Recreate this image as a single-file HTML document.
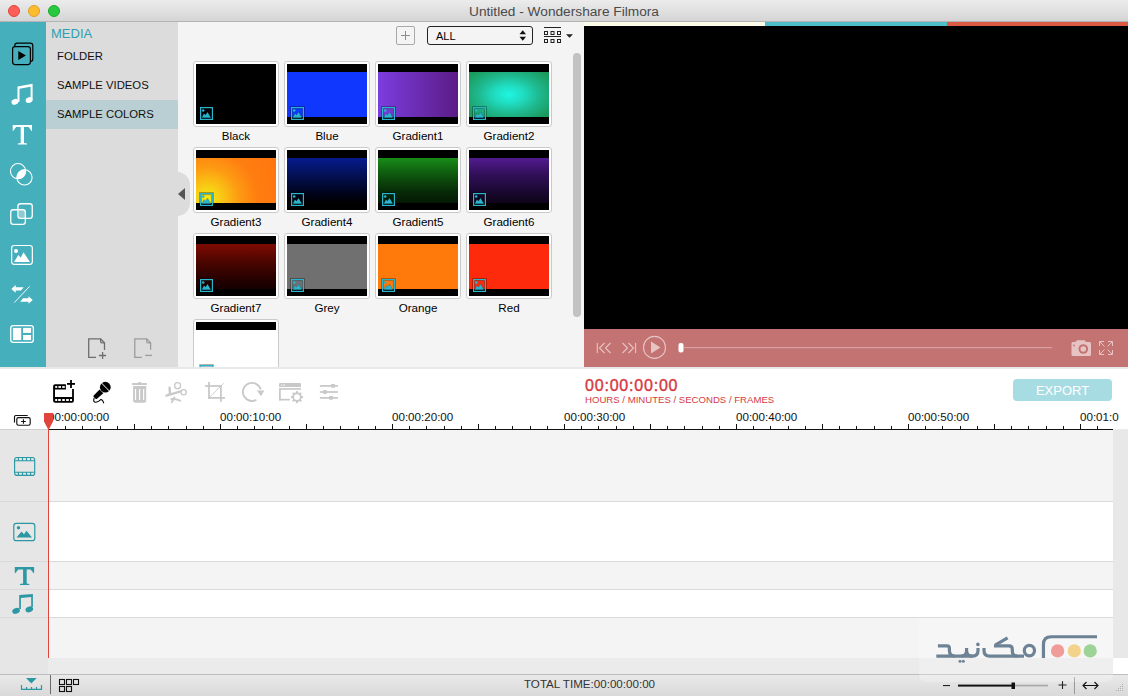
<!DOCTYPE html>
<html><head><meta charset="utf-8">
<style>
*{margin:0;padding:0;box-sizing:border-box}
html,body{width:1128px;height:696px;overflow:hidden;background:#f4f4f4;font-family:"Liberation Sans",sans-serif}
.a{position:absolute}
#title{left:0;top:0;width:1128px;height:22px;background:linear-gradient(#ececec,#d5d5d5);border-bottom:1px solid #b4b4b4}
.tl{width:12px;height:12px;border-radius:50%;top:5px}
#side{left:0;top:22px;width:46px;height:345px;background:#45b0bc}
#mpanel{left:46px;top:22px;width:132px;height:345px;background:#dcdcdc;z-index:2}
.mi{left:11px;font-size:11.3px;color:#111;white-space:nowrap}
#content{left:178px;top:22px;width:406px;height:345px;background:#f4f4f4;overflow:hidden}
#preview{left:584px;top:22px;width:544px;height:345px;background:#000}
.th{width:86px;height:66px;border:1px solid #cacaca;border-radius:3px;background:#fff;padding:2px}
.th .in{width:80px;height:60px;background:#000;position:relative;overflow:hidden}
.th .cl{position:absolute;left:0;top:8px;width:80px;height:45px}
.lbl{font-size:11.6px;color:#000;text-align:center;width:86px;white-space:nowrap}
.ic{position:absolute;left:3px;top:42px;width:15px;height:15px}
#tlbar{left:0;top:367px;width:1128px;height:62px;background:#fff;border-top:2px solid #e6e9e9}
#tracks{left:0;top:429px;width:1128px;height:245px;background:#ebebeb}
#status{left:0;top:674px;width:1128px;height:22px;background:linear-gradient(#e9e9e9,#d9d9d9);border-top:1px solid #bdbdbd}
</style></head><body>
<div id="title" class="a">
  <div class="a tl" style="left:8px;background:#fc5f57;border:0.5px solid #e0443e"></div>
  <div class="a tl" style="left:28px;background:#fdbc2e;border:0.5px solid #dea123"></div>
  <div class="a tl" style="left:48px;background:#28c840;border:0.5px solid #1aab29"></div>
  <div class="a" style="left:0;width:1128px;top:3.5px;text-align:center;font-size:13.7px;color:#4a4a4a">Untitled - Wondershare Filmora</div>
</div>
<div id="side" class="a">
<svg class="a" style="left:0;top:0" width="46" height="345" viewBox="0 22 46 345">
 <!-- media -->
 <path d="M14.75 47 V45.7 A2.5 2.5 0 0 1 17.25 43.2 H30.3 A2.5 2.5 0 0 1 32.8 45.7 V59 A2.5 2.5 0 0 1 30.6 61.5" fill="none" stroke="#000" stroke-width="1.2"/>
 <rect x="12.6" y="46.6" width="17.8" height="18" rx="2.5" fill="none" stroke="#000" stroke-width="1.2"/>
 <path d="M18.3 51 L25.9 55.5 L18.3 60Z" fill="#000"/>
 <!-- music -->
 <g fill="#fff">
  <path d="M17.5 86.4 L32.6 83.8 V100 H30.6 V86.7 L19.5 88.8 V101.8 H17.5 Z"/>
  <ellipse cx="14.9" cy="101.8" rx="3.5" ry="2.8" transform="rotate(-18 14.9 101.8)"/>
  <ellipse cx="29.1" cy="100.1" rx="3.5" ry="2.8" transform="rotate(-18 29.1 100.1)"/>
 </g>
 <path d="M12.7 125 H32 V131 H31.6 L28.6 127 H24 V143.1 L27 143.5 V144.5 H17.8 V143.5 L20.7 143.1 V127 H16.1 L13.1 131 H12.7 Z" fill="#fff"/>
</svg>

<svg class="a" style="left:0;top:0" width="46" height="345" viewBox="0 22 46 345">
 <!-- blend circles -->
 <defs><clipPath id="c1"><circle cx="18.05" cy="171.15" r="7.8"/></clipPath></defs>
 <circle cx="24.5" cy="177.4" r="7.8" fill="#fff" clip-path="url(#c1)"/>
 <circle cx="18.05" cy="171.15" r="7.6" fill="none" stroke="#fff" stroke-width="1.1"/>
 <circle cx="24.5" cy="177.4" r="7.6" fill="none" stroke="#fff" stroke-width="1.1"/>
 <!-- overlay squares -->
 <rect x="18.6" y="210.4" width="6.8" height="8" fill="#8ccbd2"/>
 <rect x="17.95" y="203.75" width="14.3" height="14.6" rx="2.6" fill="none" stroke="#fff" stroke-width="1.3"/>
 <rect x="10.75" y="209.75" width="14.6" height="14.6" rx="2.6" fill="none" stroke="#fff" stroke-width="1.3"/>
 <!-- image -->
 <rect x="11.65" y="245.5" width="20.7" height="18.8" rx="2.5" fill="none" stroke="#fff" stroke-width="1.2"/>
 <circle cx="16" cy="251" r="2" fill="#fff"/>
 <path d="M14 261.9 L18.4 255 L20.7 257.8 L23.5 252.2 L29.9 261.9Z" fill="#fff"/>
 <!-- transitions -->
 <path d="M11.3 288.9 L15.7 285.1 V287.2 H23.7 L20.8 290.6 H15.7 V292.7 Z" fill="#fff"/>
 <path d="M32.7 299.9 L28.5 296.2 V298.2 H23 L20.2 301.7 H28.5 V303.7 Z" fill="#fff"/>
 <path d="M14.3 302.6 L29.7 286.3" stroke="#fff" stroke-width="0.9"/>
 <!-- layout -->
 <rect x="10.75" y="325.55" width="22.6" height="16.9" rx="2.6" fill="none" stroke="#fff" stroke-width="1.3"/>
 <rect x="12.9" y="327.9" width="8.3" height="12.2" fill="#fff"/>
 <rect x="23" y="327.9" width="8.1" height="5" fill="#fff"/>
 <rect x="23" y="335" width="8.1" height="5.1" fill="#fff"/>
</svg>
</div>
<div id="mpanel" class="a">
  <div class="a" style="left:5px;top:4px;font-size:13px;color:#2f9fb1">MEDIA</div>
  <div class="a mi" style="top:28px">FOLDER</div>
  <div class="a mi" style="top:57px">SAMPLE VIDEOS</div>
  <div class="a" style="left:0;top:78px;width:132px;height:29px;background:#b9cfd3"></div>
  <div class="a mi" style="top:86px">SAMPLE COLORS</div>
<div class="a" style="left:119px;top:150px;width:25px;height:44px;background:#dcdcdc;border-radius:0 13px 13px 0;z-index:3"></div>
<svg class="a" style="left:132px;top:166px;z-index:4" width="8" height="12" viewBox="0 0 8 12"><path d="M0 6 L7 0 L7 12Z" fill="#555"/></svg>
<svg class="a" style="left:0;top:0" width="132" height="345" viewBox="46 22 132 345">
 <g fill="none" stroke="#6e6e6e" stroke-width="1.3">
  <path d="M104.5 349.9 V342.8 L100.6 338.8 H88.7 V357.3 H96"/>
  <path d="M100.6 338.8 V341.6 Q100.6 342.8 101.8 342.8 H104.5"/>
  <path d="M99 355.5 H106.1 M102.6 352.1 V358.9"/>
 </g>
 <g fill="none" stroke="#9c9c9c" stroke-width="1.3">
  <path d="M150.6 349.7 V342.8 L146.7 338.8 H134.8 V357.3 H141.8"/>
  <path d="M146.7 338.8 V341.6 Q146.7 342.8 147.9 342.8 H150.6"/>
  <path d="M145.1 355.4 H152"/>
 </g>
</svg>

</div>
<div id="content" class="a">

<div class="a" style="left:218px;top:4px;width:19px;height:19px;border:1px solid #a8a8a8;border-radius:2px"></div>
<div class="a" style="left:227px;top:9px;width:1px;height:9px;background:#8c8c8c"></div>
<div class="a" style="left:223px;top:13px;width:9px;height:1px;background:#8c8c8c"></div>
<div class="a" style="left:249px;top:4px;width:106px;height:19px;border:1px solid #222;border-radius:3px;background:#f4f4f4"></div>
<div class="a" style="left:258px;top:8px;font-size:11px;color:#000">ALL</div>
<svg class="a" style="left:341px;top:8px" width="8" height="12" viewBox="0 0 8 12"><path d="M0.5 4.2 L3.75 0.3 L7 4.2Z M0.5 6.8 L3.75 10.8 L7 6.8Z" fill="#111"/></svg>
<svg class="a" style="left:365px;top:4px" width="32" height="18" viewBox="0 0 32 18">
 <rect x="1" y="1" width="17" height="1" fill="#222"/>
 <rect x="1" y="10" width="17" height="1" fill="#222"/>
 <rect x="1.5" y="5.5" width="3" height="3" fill="none" stroke="#222" stroke-width="1"/>
 <rect x="8" y="5.5" width="3" height="3" fill="none" stroke="#222" stroke-width="1"/>
 <rect x="14.5" y="5.5" width="3" height="3" fill="none" stroke="#222" stroke-width="1"/>
 <rect x="1.5" y="13.5" width="3" height="3" fill="none" stroke="#222" stroke-width="1"/>
 <rect x="8" y="13.5" width="3" height="3" fill="none" stroke="#222" stroke-width="1"/>
 <rect x="14.5" y="13.5" width="3" height="3" fill="none" stroke="#222" stroke-width="1"/>
 <path d="M23 8.2 L30 8.2 L26.5 11.7Z" fill="#222"/>
</svg>
<div class="a" style="left:395px;top:31px;width:8px;height:264px;background:#c2c2c2;border-radius:4px"></div>
<div class="a th" style="left:15px;top:39px"><div class="in"><div class="cl" style="background:#000"></div><svg class="ic" width="15" height="15" viewBox="-1 -1 15 15"><rect x="-0.4" y="-0.4" width="13.8" height="13.8" fill="none" stroke="rgba(0,0,0,0.35)" stroke-width="0.9"/><rect x="1.6" y="1.6" width="9.8" height="9.8" fill="none" stroke="rgba(0,0,0,0.3)" stroke-width="0.9"/><rect x="0.6" y="0.6" width="11.8" height="11.8" fill="none" stroke="#2ab5cf" stroke-width="1.2"/><circle cx="3.2" cy="3.5" r="1.25" fill="#2ab5cf"/><path d="M1.7 10.8 L3.9 6.5 L5.5 8 L7.5 5.1 L11 10.8Z" fill="#2ab5cf" stroke="rgba(0,0,0,0.25)" stroke-width="0.6"/></svg></div></div>
<div class="a lbl" style="left:15px;top:107px">Black</div>
<div class="a th" style="left:106px;top:39px"><div class="in"><div class="cl" style="background:#0f37fe"></div><svg class="ic" width="15" height="15" viewBox="-1 -1 15 15"><rect x="-0.4" y="-0.4" width="13.8" height="13.8" fill="none" stroke="rgba(0,0,0,0.35)" stroke-width="0.9"/><rect x="1.6" y="1.6" width="9.8" height="9.8" fill="none" stroke="rgba(0,0,0,0.3)" stroke-width="0.9"/><rect x="0.6" y="0.6" width="11.8" height="11.8" fill="none" stroke="#2ab5cf" stroke-width="1.2"/><circle cx="3.2" cy="3.5" r="1.25" fill="#2ab5cf"/><path d="M1.7 10.8 L3.9 6.5 L5.5 8 L7.5 5.1 L11 10.8Z" fill="#2ab5cf" stroke="rgba(0,0,0,0.25)" stroke-width="0.6"/></svg></div></div>
<div class="a lbl" style="left:106px;top:107px">Blue</div>
<div class="a th" style="left:197px;top:39px"><div class="in"><div class="cl" style="background:linear-gradient(90deg,#7b3ddf,#5b1c86)"></div><svg class="ic" width="15" height="15" viewBox="-1 -1 15 15"><rect x="-0.4" y="-0.4" width="13.8" height="13.8" fill="none" stroke="rgba(0,0,0,0.35)" stroke-width="0.9"/><rect x="1.6" y="1.6" width="9.8" height="9.8" fill="none" stroke="rgba(0,0,0,0.3)" stroke-width="0.9"/><rect x="0.6" y="0.6" width="11.8" height="11.8" fill="none" stroke="#2ab5cf" stroke-width="1.2"/><circle cx="3.2" cy="3.5" r="1.25" fill="#2ab5cf"/><path d="M1.7 10.8 L3.9 6.5 L5.5 8 L7.5 5.1 L11 10.8Z" fill="#2ab5cf" stroke="rgba(0,0,0,0.25)" stroke-width="0.6"/></svg></div></div>
<div class="a lbl" style="left:197px;top:107px">Gradient1</div>
<div class="a th" style="left:288px;top:39px"><div class="in"><div class="cl" style="background:radial-gradient(ellipse 62% 68% at 50% 50%,#1ff5e2 0%,#20dcc0 30%,#1fb88e 62%,#1a9a5c 100%)"></div><svg class="ic" width="15" height="15" viewBox="-1 -1 15 15"><rect x="-0.4" y="-0.4" width="13.8" height="13.8" fill="none" stroke="rgba(0,0,0,0.35)" stroke-width="0.9"/><rect x="1.6" y="1.6" width="9.8" height="9.8" fill="none" stroke="rgba(0,0,0,0.3)" stroke-width="0.9"/><rect x="0.6" y="0.6" width="11.8" height="11.8" fill="none" stroke="#2ab5cf" stroke-width="1.2"/><circle cx="3.2" cy="3.5" r="1.25" fill="#2ab5cf"/><path d="M1.7 10.8 L3.9 6.5 L5.5 8 L7.5 5.1 L11 10.8Z" fill="#2ab5cf" stroke="rgba(0,0,0,0.25)" stroke-width="0.6"/></svg></div></div>
<div class="a lbl" style="left:288px;top:107px">Gradient2</div>
<div class="a th" style="left:15px;top:125px"><div class="in"><div class="cl" style="background:radial-gradient(circle at 14% 92%,#f4ee12 0%,#f9c814 18%,#fd9a12 40%,#ff7e10 62%,#ff7510 100%)"></div><svg class="ic" width="15" height="15" viewBox="-1 -1 15 15"><rect x="-0.4" y="-0.4" width="13.8" height="13.8" fill="none" stroke="rgba(0,0,0,0.35)" stroke-width="0.9"/><rect x="1.6" y="1.6" width="9.8" height="9.8" fill="none" stroke="rgba(0,0,0,0.3)" stroke-width="0.9"/><rect x="0.6" y="0.6" width="11.8" height="11.8" fill="none" stroke="#2ab5cf" stroke-width="1.2"/><circle cx="3.2" cy="3.5" r="1.25" fill="#2ab5cf"/><path d="M1.7 10.8 L3.9 6.5 L5.5 8 L7.5 5.1 L11 10.8Z" fill="#2ab5cf" stroke="rgba(0,0,0,0.25)" stroke-width="0.6"/></svg></div></div>
<div class="a lbl" style="left:15px;top:193px">Gradient3</div>
<div class="a th" style="left:106px;top:125px"><div class="in"><div class="cl" style="background:linear-gradient(#061b8f,#031052 40%,#010420 75%,#000 100%)"></div><svg class="ic" width="15" height="15" viewBox="-1 -1 15 15"><rect x="-0.4" y="-0.4" width="13.8" height="13.8" fill="none" stroke="rgba(0,0,0,0.35)" stroke-width="0.9"/><rect x="1.6" y="1.6" width="9.8" height="9.8" fill="none" stroke="rgba(0,0,0,0.3)" stroke-width="0.9"/><rect x="0.6" y="0.6" width="11.8" height="11.8" fill="none" stroke="#2ab5cf" stroke-width="1.2"/><circle cx="3.2" cy="3.5" r="1.25" fill="#2ab5cf"/><path d="M1.7 10.8 L3.9 6.5 L5.5 8 L7.5 5.1 L11 10.8Z" fill="#2ab5cf" stroke="rgba(0,0,0,0.25)" stroke-width="0.6"/></svg></div></div>
<div class="a lbl" style="left:106px;top:193px">Gradient4</div>
<div class="a th" style="left:197px;top:125px"><div class="in"><div class="cl" style="background:linear-gradient(#188c18,#0f5a0f 35%,#072a07 75%,#041804)"></div><svg class="ic" width="15" height="15" viewBox="-1 -1 15 15"><rect x="-0.4" y="-0.4" width="13.8" height="13.8" fill="none" stroke="rgba(0,0,0,0.35)" stroke-width="0.9"/><rect x="1.6" y="1.6" width="9.8" height="9.8" fill="none" stroke="rgba(0,0,0,0.3)" stroke-width="0.9"/><rect x="0.6" y="0.6" width="11.8" height="11.8" fill="none" stroke="#2ab5cf" stroke-width="1.2"/><circle cx="3.2" cy="3.5" r="1.25" fill="#2ab5cf"/><path d="M1.7 10.8 L3.9 6.5 L5.5 8 L7.5 5.1 L11 10.8Z" fill="#2ab5cf" stroke="rgba(0,0,0,0.25)" stroke-width="0.6"/></svg></div></div>
<div class="a lbl" style="left:197px;top:193px">Gradient5</div>
<div class="a th" style="left:288px;top:125px"><div class="in"><div class="cl" style="background:linear-gradient(#521b8f,#33105c 35%,#1a0830 75%,#0e0418)"></div><svg class="ic" width="15" height="15" viewBox="-1 -1 15 15"><rect x="-0.4" y="-0.4" width="13.8" height="13.8" fill="none" stroke="rgba(0,0,0,0.35)" stroke-width="0.9"/><rect x="1.6" y="1.6" width="9.8" height="9.8" fill="none" stroke="rgba(0,0,0,0.3)" stroke-width="0.9"/><rect x="0.6" y="0.6" width="11.8" height="11.8" fill="none" stroke="#2ab5cf" stroke-width="1.2"/><circle cx="3.2" cy="3.5" r="1.25" fill="#2ab5cf"/><path d="M1.7 10.8 L3.9 6.5 L5.5 8 L7.5 5.1 L11 10.8Z" fill="#2ab5cf" stroke="rgba(0,0,0,0.25)" stroke-width="0.6"/></svg></div></div>
<div class="a lbl" style="left:288px;top:193px">Gradient6</div>
<div class="a th" style="left:15px;top:211px"><div class="in"><div class="cl" style="background:linear-gradient(#7e0b00,#4c0500 40%,#240100 80%,#150000)"></div><svg class="ic" width="15" height="15" viewBox="-1 -1 15 15"><rect x="-0.4" y="-0.4" width="13.8" height="13.8" fill="none" stroke="rgba(0,0,0,0.35)" stroke-width="0.9"/><rect x="1.6" y="1.6" width="9.8" height="9.8" fill="none" stroke="rgba(0,0,0,0.3)" stroke-width="0.9"/><rect x="0.6" y="0.6" width="11.8" height="11.8" fill="none" stroke="#2ab5cf" stroke-width="1.2"/><circle cx="3.2" cy="3.5" r="1.25" fill="#2ab5cf"/><path d="M1.7 10.8 L3.9 6.5 L5.5 8 L7.5 5.1 L11 10.8Z" fill="#2ab5cf" stroke="rgba(0,0,0,0.25)" stroke-width="0.6"/></svg></div></div>
<div class="a lbl" style="left:15px;top:279px">Gradient7</div>
<div class="a th" style="left:106px;top:211px"><div class="in"><div class="cl" style="background:#707070"></div><svg class="ic" width="15" height="15" viewBox="-1 -1 15 15"><rect x="-0.4" y="-0.4" width="13.8" height="13.8" fill="none" stroke="rgba(0,0,0,0.35)" stroke-width="0.9"/><rect x="1.6" y="1.6" width="9.8" height="9.8" fill="none" stroke="rgba(0,0,0,0.3)" stroke-width="0.9"/><rect x="0.6" y="0.6" width="11.8" height="11.8" fill="none" stroke="#2ab5cf" stroke-width="1.2"/><circle cx="3.2" cy="3.5" r="1.25" fill="#2ab5cf"/><path d="M1.7 10.8 L3.9 6.5 L5.5 8 L7.5 5.1 L11 10.8Z" fill="#2ab5cf" stroke="rgba(0,0,0,0.25)" stroke-width="0.6"/></svg></div></div>
<div class="a lbl" style="left:106px;top:279px">Grey</div>
<div class="a th" style="left:197px;top:211px"><div class="in"><div class="cl" style="background:#ff7a0a"></div><svg class="ic" width="15" height="15" viewBox="-1 -1 15 15"><rect x="-0.4" y="-0.4" width="13.8" height="13.8" fill="none" stroke="rgba(0,0,0,0.35)" stroke-width="0.9"/><rect x="1.6" y="1.6" width="9.8" height="9.8" fill="none" stroke="rgba(0,0,0,0.3)" stroke-width="0.9"/><rect x="0.6" y="0.6" width="11.8" height="11.8" fill="none" stroke="#2ab5cf" stroke-width="1.2"/><circle cx="3.2" cy="3.5" r="1.25" fill="#2ab5cf"/><path d="M1.7 10.8 L3.9 6.5 L5.5 8 L7.5 5.1 L11 10.8Z" fill="#2ab5cf" stroke="rgba(0,0,0,0.25)" stroke-width="0.6"/></svg></div></div>
<div class="a lbl" style="left:197px;top:279px">Orange</div>
<div class="a th" style="left:288px;top:211px"><div class="in"><div class="cl" style="background:#fd2a0b"></div><svg class="ic" width="15" height="15" viewBox="-1 -1 15 15"><rect x="-0.4" y="-0.4" width="13.8" height="13.8" fill="none" stroke="rgba(0,0,0,0.35)" stroke-width="0.9"/><rect x="1.6" y="1.6" width="9.8" height="9.8" fill="none" stroke="rgba(0,0,0,0.3)" stroke-width="0.9"/><rect x="0.6" y="0.6" width="11.8" height="11.8" fill="none" stroke="#2ab5cf" stroke-width="1.2"/><circle cx="3.2" cy="3.5" r="1.25" fill="#2ab5cf"/><path d="M1.7 10.8 L3.9 6.5 L5.5 8 L7.5 5.1 L11 10.8Z" fill="#2ab5cf" stroke="rgba(0,0,0,0.25)" stroke-width="0.6"/></svg></div></div>
<div class="a lbl" style="left:288px;top:279px">Red</div>
<div class="a th" style="left:15px;top:297px"><div class="in"><div class="cl" style="background:#fff"></div><svg class="ic" width="15" height="15" viewBox="-1 -1 15 15"><rect x="-0.4" y="-0.4" width="13.8" height="13.8" fill="none" stroke="rgba(0,0,0,0.35)" stroke-width="0.9"/><rect x="1.6" y="1.6" width="9.8" height="9.8" fill="none" stroke="rgba(0,0,0,0.3)" stroke-width="0.9"/><rect x="0.6" y="0.6" width="11.8" height="11.8" fill="none" stroke="#2ab5cf" stroke-width="1.2"/><circle cx="3.2" cy="3.5" r="1.25" fill="#2ab5cf"/><path d="M1.7 10.8 L3.9 6.5 L5.5 8 L7.5 5.1 L11 10.8Z" fill="#2ab5cf" stroke="rgba(0,0,0,0.25)" stroke-width="0.6"/></svg></div></div>
</div>
<div id="preview" class="a">
 <div class="a" style="left:0;top:0;width:181px;height:4px;background:#fdfce8"></div>
 <div class="a" style="left:181px;top:0;width:182px;height:4px;background:#4fbdca"></div>
 <div class="a" style="left:363px;top:0;width:181px;height:4px;background:#dd5a44"></div>
 <div class="a" style="left:0;top:307px;width:544px;height:38px;background:#c47373"></div>
 <svg class="a" style="left:0;top:307px" width="544" height="38" viewBox="584 329 544 38">
  <g fill="none" stroke="#e8c3c3" stroke-width="1.1">
   <path d="M597.3 343 V353"/>
   <path d="M604.5 343 L599.5 348 L604.5 353 M610.5 343 L605.5 348 L610.5 353"/>
   <path d="M622.5 343 L627.5 348 L622.5 353 M628.5 343 L633.5 348 L628.5 353"/>
   <path d="M635.6 343 V353"/>
   <circle cx="654.5" cy="347.4" r="11"/>
  </g>
  <path d="M651 341.5 L660.5 347.5 L651 353.5Z" fill="#e8c3c3"/>
  <rect x="684" y="347" width="368" height="1.2" fill="#d9a0a4"/>
  <rect x="678.5" y="343" width="5" height="9.5" rx="2" fill="#fff"/>
  <!-- camera -->
  <path d="M1071.5 343.5 Q1071.5 342 1073 342 H1075.5 L1077 340.3 H1084.5 L1086 342 H1089.5 Q1091 342 1091 343.5 V354.5 Q1091 356 1089.5 356 H1073 Q1071.5 356 1071.5 354.5Z" fill="#e8c3c3"/>
  <circle cx="1083.3" cy="349" r="4.8" fill="#c47373"/>
  <circle cx="1083.3" cy="349" r="2.8" fill="#e8c3c3"/>
  <circle cx="1074" cy="345.5" r="0.9" fill="#c47373"/>
  <!-- fullscreen -->
  <g fill="none" stroke="#e8c3c3" stroke-width="1">
   <path d="M1099.5 346 V341.5 H1104 M1100 342 L1104.5 346.5"/>
   <path d="M1108 341.5 H1112.5 V346 M1112 342 L1107.5 346.5"/>
   <path d="M1099.5 350 V354.5 H1104 M1100 354 L1104.5 349.5"/>
   <path d="M1108 354.5 H1112.5 V350 M1112 354 L1107.5 349.5"/>
  </g>
 </svg>
</div>
<div id="tlbar" class="a"></div>
<svg class="a" style="left:0;top:367px" width="1128" height="62" viewBox="0 367 1128 62">
 <!-- film add -->
 <g fill="#000">
  <path d="M53.1 386.2 Q53.1 384.2 55.1 384.2 H65.9 V389.6 H55 V397 H72.1 V389 H73.9 V400.7 Q73.9 402.7 71.9 402.7 H55.1 Q53.1 402.7 53.1 400.7 Z"/>
  <rect x="67" y="383" width="8" height="1.8"/>
  <rect x="70.1" y="380" width="1.8" height="8"/>
 </g>
 <g fill="#fff">
  <rect x="55.2" y="386.1" width="2" height="1.8"/><rect x="58.4" y="386.1" width="2.6" height="1.8"/><rect x="62.2" y="386.1" width="2.6" height="1.8"/>
  <rect x="55.2" y="399" width="2" height="2"/><rect x="58.2" y="399" width="2.6" height="2"/><rect x="62.2" y="399" width="2.6" height="2"/><rect x="66.2" y="399" width="2.6" height="2"/><rect x="70" y="399" width="2" height="2"/>
 </g>
 <!-- mic -->
 <g fill="#000">
  <circle cx="105.3" cy="387.2" r="5.4"/>
  <path d="M99.6 389.6 L103.3 393.3 L97 398.8 Q96.3 399.4 95.6 398.8 L93.7 396.9 Q93.1 396.2 93.7 395.5 Z"/>
 </g>
 <path d="M101.3 382.8 L109.7 391.4" stroke="#fff" stroke-width="1"/>
 <path d="M94.2 398 Q92.6 402.4 96 402.3 Q98.7 401.6 100.4 399.8 Q102.3 398.9 103.8 403.2" fill="none" stroke="#000" stroke-width="1.1"/>
 <!-- trash -->
 <g fill="#c9c9c9">
  <rect x="132" y="383.1" width="15" height="1.8" rx="0.6"/>
  <rect x="138.2" y="382" width="2.6" height="1.5"/>
  <path d="M133.1 385.9 H146.2 V400.7 Q146.2 402.7 144.2 402.7 H135.1 Q133.1 402.7 133.1 400.7Z"/>
 </g>
 <g fill="#fff"><rect x="135" y="389" width="1.1" height="11"/><rect x="139.1" y="389" width="1.1" height="11"/><rect x="143.1" y="389" width="1.1" height="11"/></g>
 <!-- split -->
 <g stroke="#c9c9c9" fill="none" stroke-linecap="round">
  <circle cx="177.6" cy="385.7" r="3" stroke-width="1.3"/>
  <circle cx="183.7" cy="392.2" r="2.65" stroke-width="1.3"/>
  <path d="M166.4 395.6 L180.6 391.4" stroke-width="2.2"/>
  <path d="M169.6 387.7 L169.9 393.8" stroke-width="2.4"/>
  <path d="M171.4 399.1 Q176 399 180.2 400.6" stroke-width="2"/>
  <path d="M174.4 397.5 L171.7 402.3" stroke-width="1.8"/>
 </g>
 <!-- crop -->
 <g fill="#c9c9c9">
  <rect x="208.1" y="382" width="1.8" height="16.7"/>
  <rect x="205.1" y="385.1" width="16.7" height="1.8"/>
  <rect x="220" y="385.1" width="1.8" height="16.7"/>
  <rect x="208.1" y="397" width="16.9" height="1.8"/>
 </g>
 <path d="M209.4 397.4 L223.8 383.1" stroke="#c9c9c9" stroke-width="0.9"/>
 <!-- rotate -->
 <path d="M256.4 399.7 A9 9 0 1 1 260.6 389.5" fill="none" stroke="#c9c9c9" stroke-width="1.9"/>
 <path d="M256.8 390.6 H264.4 L261 396.2Z" fill="#c9c9c9"/>
 <!-- settings window -->
 <g fill="#c9c9c9">
  <path d="M279 384 Q279 383.1 280 383.1 H300 Q301 383.1 301 384 V386.9 H279Z"/>
  <rect x="279" y="388.1" width="22" height="1.7"/>
  <rect x="279" y="388.1" width="1.8" height="12.4"/>
  <rect x="279" y="398.8" width="10.8" height="1.7"/>
 </g>
 <g fill="#fff"><rect x="281" y="384.6" width="1.2" height="1"/><rect x="283.4" y="384.6" width="1.6" height="1"/></g>
 <g transform="translate(297 397.1)">
  <g fill="#c9c9c9">
   <rect x="-1" y="-6" width="2" height="12"/>
   <rect x="-1" y="-6" width="2" height="12" transform="rotate(45)"/>
   <rect x="-1" y="-6" width="2" height="12" transform="rotate(90)"/>
   <rect x="-1" y="-6" width="2" height="12" transform="rotate(135)"/>
  </g>
  <circle r="3.9" fill="none" stroke="#c9c9c9" stroke-width="1.7"/>
  <circle r="2.9" fill="#fff"/>
 </g>
 <!-- sliders -->
 <g fill="#c9c9c9">
  <rect x="319.9" y="385" width="18" height="1.8"/><rect x="319.9" y="391.1" width="18" height="1.8"/><rect x="319.9" y="397" width="18" height="1.8"/>
  <rect x="330.8" y="384" width="4.3" height="3.8" rx="1"/>
  <rect x="323" y="390.1" width="4" height="3.8" rx="1"/>
  <rect x="328.9" y="396" width="4.1" height="3.8" rx="1"/>
 </g>
</svg>
<div class="a" style="left:585px;top:377px;font-size:16px;letter-spacing:0.8px;color:#d63a43;-webkit-text-stroke:0.4px #d63a43">00:00:00:00</div>
<div class="a" style="left:585px;top:394px;font-size:9.6px;color:#d63a43;white-space:nowrap">HOURS / MINUTES / SECONDS / FRAMES</div>
<div class="a" style="left:1013px;top:379px;width:99px;height:22px;background:#a8dce3;border-radius:4px;color:#fff;font-size:13px;text-align:center;line-height:23px">EXPORT</div>
<div id="ruler" class="a" style="left:0;top:405px;width:1128px;height:24px">
</div>
<svg class="a" style="left:0;top:405px;z-index:3" width="1128" height="25" viewBox="0 405 1128 25">
 <g fill="#111"><rect x="48" y="424" width="1" height="5"/><rect x="65" y="426" width="1" height="3"/><rect x="82" y="426" width="1" height="3"/><rect x="100" y="426" width="1" height="3"/><rect x="117" y="426" width="1" height="3"/><rect x="134" y="424" width="1" height="5"/><rect x="151" y="426" width="1" height="3"/><rect x="168" y="426" width="1" height="3"/><rect x="186" y="426" width="1" height="3"/><rect x="203" y="426" width="1" height="3"/><rect x="220" y="424" width="1" height="5"/><rect x="237" y="426" width="1" height="3"/><rect x="254" y="426" width="1" height="3"/><rect x="272" y="426" width="1" height="3"/><rect x="289" y="426" width="1" height="3"/><rect x="306" y="424" width="1" height="5"/><rect x="323" y="426" width="1" height="3"/><rect x="340" y="426" width="1" height="3"/><rect x="358" y="426" width="1" height="3"/><rect x="375" y="426" width="1" height="3"/><rect x="392" y="424" width="1" height="5"/><rect x="409" y="426" width="1" height="3"/><rect x="426" y="426" width="1" height="3"/><rect x="444" y="426" width="1" height="3"/><rect x="461" y="426" width="1" height="3"/><rect x="478" y="424" width="1" height="5"/><rect x="495" y="426" width="1" height="3"/><rect x="512" y="426" width="1" height="3"/><rect x="530" y="426" width="1" height="3"/><rect x="547" y="426" width="1" height="3"/><rect x="564" y="424" width="1" height="5"/><rect x="581" y="426" width="1" height="3"/><rect x="598" y="426" width="1" height="3"/><rect x="616" y="426" width="1" height="3"/><rect x="633" y="426" width="1" height="3"/><rect x="650" y="424" width="1" height="5"/><rect x="667" y="426" width="1" height="3"/><rect x="684" y="426" width="1" height="3"/><rect x="702" y="426" width="1" height="3"/><rect x="719" y="426" width="1" height="3"/><rect x="736" y="424" width="1" height="5"/><rect x="753" y="426" width="1" height="3"/><rect x="770" y="426" width="1" height="3"/><rect x="788" y="426" width="1" height="3"/><rect x="805" y="426" width="1" height="3"/><rect x="822" y="424" width="1" height="5"/><rect x="839" y="426" width="1" height="3"/><rect x="856" y="426" width="1" height="3"/><rect x="874" y="426" width="1" height="3"/><rect x="891" y="426" width="1" height="3"/><rect x="908" y="424" width="1" height="5"/><rect x="925" y="426" width="1" height="3"/><rect x="942" y="426" width="1" height="3"/><rect x="960" y="426" width="1" height="3"/><rect x="977" y="426" width="1" height="3"/><rect x="994" y="424" width="1" height="5"/><rect x="1011" y="426" width="1" height="3"/><rect x="1028" y="426" width="1" height="3"/><rect x="1046" y="426" width="1" height="3"/><rect x="1063" y="426" width="1" height="3"/><rect x="1080" y="424" width="1" height="5"/><rect x="1097" y="426" width="1" height="3"/></g>
 <rect x="48" y="429" width="1065" height="1" fill="#111"/>
 <g fill="none" stroke="#111" stroke-width="1.15">
  <path d="M14.5 422.4 V416.8 Q14.5 415.5 15.8 415.5 H27.7"/>
  <rect x="16.8" y="417.6" width="13.4" height="7.6" rx="1.6"/>
 </g>
 <path d="M23.45 419.2 V423.8 M21.1 421.5 H25.8" stroke="#111" stroke-width="1.05"/>
</svg>
<div class="a" style="left:48px;top:410px;font-size:11.6px;color:#111;white-space:nowrap">00:00:00:00</div>
<div class="a" style="left:220px;top:410px;font-size:11.6px;color:#111;white-space:nowrap">00:00:10:00</div>
<div class="a" style="left:392px;top:410px;font-size:11.6px;color:#111;white-space:nowrap">00:00:20:00</div>
<div class="a" style="left:564px;top:410px;font-size:11.6px;color:#111;white-space:nowrap">00:00:30:00</div>
<div class="a" style="left:736px;top:410px;font-size:11.6px;color:#111;white-space:nowrap">00:00:40:00</div>
<div class="a" style="left:908px;top:410px;font-size:11.6px;color:#111;white-space:nowrap">00:00:50:00</div>
<div class="a" style="left:1080px;top:410px;font-size:11.6px;color:#111;white-space:nowrap">00:01:0</div><div id="tracks" class="a">
 <div class="a" style="left:0;top:0;width:48px;height:245px;background:#e6e6e6;border-top:1px solid #cfcfcf"></div>
 <div class="a" style="left:48px;top:1px;width:1065px;height:72px;background:#f4f4f4;border-bottom:1px solid #d9d9d9"></div>
 <div class="a" style="left:48px;top:73px;width:1065px;height:60px;background:#fff;border-bottom:1px solid #d9d9d9"></div>
 <div class="a" style="left:48px;top:133px;width:1065px;height:28px;background:#f4f4f4;border-bottom:1px solid #d9d9d9"></div>
 <div class="a" style="left:48px;top:161px;width:1065px;height:28px;background:#fff;border-bottom:1px solid #d9d9d9"></div>
 <div class="a" style="left:48px;top:189px;width:1065px;height:40px;background:#f4f4f4"></div>
 <div class="a" style="left:48px;top:229px;width:1065px;height:16px;background:#ebebeb"></div>
 <div class="a" style="left:1113px;top:1px;width:15px;height:228px;background:#e8e8e8"></div>
 <div class="a" style="left:1113px;top:229px;width:15px;height:16px;background:#fff"></div>
 <svg class="a" style="left:0;top:0" width="48" height="245" viewBox="0 429 48 245">
  <g fill="none" stroke="#2b98a4" stroke-width="1.15">
   <rect x="14.6" y="457.5" width="20.1" height="17.9" rx="2.5"/>
   <path d="M14.6 460.7 H34.7 M14.6 472.2 H34.7 M18.4 457.5 V460.7 M22.5 457.5 V460.7 M26.5 457.5 V460.7 M30.6 457.5 V460.7 M18.4 472.2 V475.4 M22.5 472.2 V475.4 M26.5 472.2 V475.4 M30.6 472.2 V475.4"/>
  </g>
  <rect x="13.8" y="523.3" width="21" height="17.4" rx="2.5" fill="none" stroke="#2b98a4" stroke-width="1.2"/>
  <circle cx="18.5" cy="527.8" r="1.7" fill="#2b98a4"/>
  <path d="M16.5 537.5 L21.5 531.5 L24 534.3 L26.5 530.8 L32 537.5Z" fill="#2b98a4"/>
  <path d="M14.8 567 H34.1 V573.3 H33.7 L30.6 569.4 H26.7 V583.6 L29.3 584 V584.9 H19.9 V584 L23.1 583.6 V569.4 H18.3 L15.2 573.3 H14.8 Z" fill="#2b98a4"/>
  <g fill="#2b98a4">
   <path d="M19.2 595.1 L32.9 593.9 V607 H31.2 V597 L20.9 598 V609 H19.2 Z"/>
   <ellipse cx="16.1" cy="610.8" rx="3.9" ry="2.8" transform="rotate(-20 16.1 610.8)"/>
   <ellipse cx="29.3" cy="609.3" rx="3.9" ry="2.8" transform="rotate(-20 29.3 609.3)"/>
  </g>
  <g fill="#d9d9d9"><rect x="0" y="501" width="48" height="1"/><rect x="0" y="561" width="48" height="1"/><rect x="0" y="589" width="48" height="1"/><rect x="0" y="617" width="48" height="1"/></g>
 </svg>
</div>
<div class="a" style="left:47.5px;top:429px;width:1.5px;height:229px;background:#e0443a;z-index:4"></div>
<svg class="a" style="left:43px;top:412px;z-index:4" width="12" height="19" viewBox="0 0 12 19"><path d="M1 1.5 Q1 1 1.5 1 H9.5 Q10 1 10 1.5 V9.5 L5.5 18 L1 9.5Z" fill="#e0443a"/></svg>

<div id="status" class="a">
 <svg class="a" style="left:0;top:-2px" width="1128" height="24" viewBox="0 673 1128 24">
  <path d="M26 678 H36.7 L31.35 683.6Z" fill="#2b98a4"/>
  <path d="M21.5 685 V689.3 H41.5 V685 M26.5 687 V689 M31.5 687 V689 M36.5 687 V689" fill="none" stroke="#2b98a4" stroke-width="1.2"/>
  <rect x="50" y="675" width="1" height="19" fill="#6a6a6a"/>
  <g fill="none" stroke="#111" stroke-width="1.1">
   <rect x="59.5" y="679.5" width="5" height="5"/><rect x="66.5" y="679.5" width="5" height="5"/><rect x="73.5" y="679.5" width="5" height="5"/>
   <rect x="59.5" y="686.5" width="5" height="5"/><rect x="66.5" y="686.5" width="5" height="5"/>
  </g>
  <rect x="943" y="685" width="7" height="1.1" fill="#222"/>
  <rect x="958" y="684.6" width="55" height="2" fill="#111"/>
  <rect x="1013" y="684.7" width="35" height="1.7" fill="#a9a9a9"/>
  <rect x="1011.5" y="682.5" width="3.5" height="6.5" fill="#111"/>
  <path d="M1058.5 685 H1066.5 M1062.5 681 V689" stroke="#222" stroke-width="1.1"/>
  <rect x="1074" y="677" width="1" height="17" fill="#999"/>
  <path d="M1083 685.5 H1098 M1086.5 682 L1083 685.5 L1086.5 689 M1094.5 682 L1098 685.5 L1094.5 689" fill="none" stroke="#111" stroke-width="1.1"/>
  <g fill="#b0b0b0"><rect x="1122" y="684" width="1" height="1"/><rect x="1120" y="686" width="1" height="1"/><rect x="1122" y="686" width="1" height="1"/><rect x="1118" y="688" width="1" height="1"/><rect x="1120" y="688" width="1" height="1"/><rect x="1122" y="688" width="1" height="1"/><rect x="1116" y="690" width="1" height="1"/><rect x="1118" y="690" width="1" height="1"/><rect x="1120" y="690" width="1" height="1"/><rect x="1122" y="690" width="1" height="1"/></g>
 </svg>
 <div class="a" style="left:524px;top:2px;font-size:11.6px;color:#333;white-space:nowrap">TOTAL TIME:00:00:00:00</div>
</div>

<div class="a" style="left:919px;top:618px;width:194px;height:64px;background:rgba(255,255,255,0.22);border-radius:0 0 7px 7px;z-index:5"></div>
<svg class="a" style="left:900px;top:600px;z-index:5" width="228" height="96" viewBox="900 600 228 96">
 <g fill="none" stroke="#6d8395" stroke-width="3.2">
  <path d="M936.3 656.1 H973"/>
  <path d="M937.9 645.9 H947 Q949.4 645.9 949.4 648.3 V650.5 Q949.4 656.1 955 656.1"/>
  <path d="M961 656.1 Q966.6 656.1 966.6 650.5 V648 M966.6 650.5 Q966.6 656.1 972 656.1"/>
  <path d="M972.4 656.1 Q978 656.1 978 650.5 V648"/>
  <path d="M984 648 V650.5 Q984 656.1 989.6 656.1 H1024"/>
  <path d="M994 645.9 H1009 Q1012.3 645.9 1012.3 649.3 V651 Q1012.3 656.1 1017.4 656.1"/>
  <path d="M995.2 645.2 L1007.6 637.8" stroke-linecap="butt"/>
  <ellipse cx="1029.4" cy="650.6" rx="5.1" ry="5.2"/>
  <path d="M1043.45 658 V644.5 Q1043.45 636.75 1051.2 636.75 H1097"/>
 </g>
 <g fill="#6d8395">
  <circle cx="977.9" cy="644.4" r="1.8"/>
  <circle cx="960" cy="661.2" r="1.5"/><circle cx="963.3" cy="661.2" r="1.5"/>
 </g>
 <circle cx="1057.6" cy="650.9" r="6.65" fill="#f09c98"/>
 <circle cx="1074.3" cy="650.9" r="6.65" fill="#f3d38b"/>
 <circle cx="1090.2" cy="650.9" r="6.65" fill="#9dd396"/>
</svg>
</body></html>
